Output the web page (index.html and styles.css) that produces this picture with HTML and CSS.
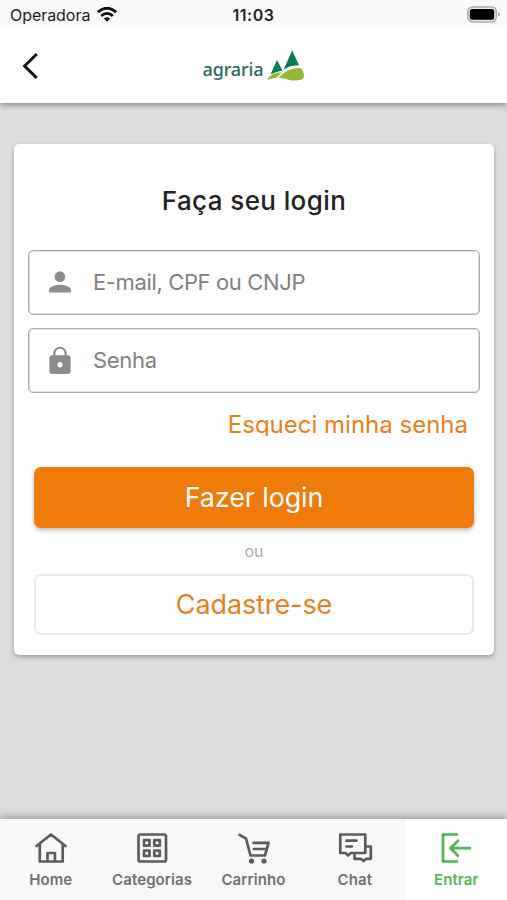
FILE: index.html
```html
<!DOCTYPE html>
<html lang="pt-BR">
<head>
<meta charset="utf-8">
<meta name="viewport" content="width=device-width">
<title>Agraria - Login</title>
<link rel="stylesheet" href="styles.css">
</head>
<body>
<div class="status">
  <div class="carrier"><span>Operadora</span>
    <svg width="20" height="15" viewBox="0 0 20 15"><g fill="none" stroke="#111" stroke-width="2.800"><path d="M.9 5.200C6-.1 14-.1 19.100 5.200"/><path d="M4.200 8.900C7.600 5.600 12.400 5.600 15.800 8.900"/></g><path fill="#111" d="M6.800 11.500C8.600 9.800 11.400 9.800 13.200 11.500L10 14.700z"/></svg>
  </div>
  <time class="clock">11:03</time>
  <svg class="battery" width="33" height="17" viewBox="0 0 33 17"><rect x=".9" y=".9" width="28.400" height="15" rx="4.800" fill="#eee" stroke="#aaa" stroke-width="1.500"/><rect x="2.800" y="3" width="24.400" height="10.800" rx="2.500"/><path fill="#aaa" d="M31 6.200q2 .7 2 2.200t-2 2.200z"/></svg>
</div>
<header class="header">
  <svg class="back" width="18" height="28" viewBox="0 0 18 28"><path d="M15.800 2 3.600 14l12.200 12" fill="none" stroke="#111" stroke-width="3"/></svg>
  <div class="brand"><span>agraria</span>
    <svg width="38" height="32" viewBox="0 0 38 32"><path fill="#087b5c" d="M10 10 15.500 20.500Q9.500 21.500 3.500 24.500zM25.200 .500 32 15.200Q23 15.200 16.600 19.500z"/><path fill="#96b535" d="M0 30Q4 22.500 15 22.200L9.500 27.700Q5 28 0 30zM11.500 28Q19 18.500 32.500 18C35 18 37 23 37 26C37 31 27 31 23.500 30.200Q17 28 11.500 28z"/></svg>
  </div>
</header>
<main class="content">
  <form class="card">
    <h1>Faça seu login</h1>
    <label class="field"><svg width="32" height="32" viewBox="0 0 24 24"><circle cx="12" cy="8" r="4"/><path d="M12 14c-2.700 0-8.200 1.300-8.200 4v1.900h16.400V18c0-2.700-5.500-4-8.200-4z"/></svg><input type="text" placeholder="E-mail, CPF ou CNJP"></label>
    <label class="field"><svg width="32" height="32" viewBox="0 0 24 24"><path d="M18 8.500h-1V7c0-2.760-2.240-5-5-5S7 4.240 7 7v1.500H6c-1.100 0-2 .9-2 2V20.500c0 1.100.9 2 2 2h12c1.100 0 2-.9 2-2V10.500c0-1.100-.9-2-2-2zm-6 9c-1.100 0-2-.9-2-2s.9-2 2-2 2 .9 2 2-.9 2-2 2zm3.400-9H8.600V7c0-1.870 1.530-3.400 3.400-3.400s3.400 1.530 3.400 3.400v1.500z"/></svg><input class="secret" type="password" placeholder="Senha"></label>
    <a class="forgot">Esqueci minha senha</a>
    <button class="btn primary" type="button"><span>Fazer login</span></button>
    <p class="or">ou</p>
    <button class="btn outline" type="button"><span>Cadastre-se</span></button>
  </form>
</main>
<nav class="tabs">
  <a class="tab"><svg width="36" height="34" viewBox="0 0 36 34"><path d="M3.500 15 18 3.500 32.500 15M6.800 13V30.500h22.900V13M14.500 30.500V22h7.400v8.500"/></svg><span>Home</span></a>
  <a class="tab"><svg width="36" height="34" viewBox="0 0 36 34"><rect x="4.500" y="3.500" width="27.500" height="27" rx="2"/><path d="M10 9.200h5.500v5.500H10zM20.300 9.200h5.500v5.500h-5.500zM10 19.500h5.500V25H10zM20.300 19.500h5.500V25h-5.500z"/></svg><span>Categorias</span></a>
  <a class="tab"><svg width="36" height="34" viewBox="0 0 36 34"><path d="M4.500 3.800 11 7.500l4.500 17H30L33.500 11.800H18.500M18.800 18H31"/><g class="dot"><circle cx="16.500" cy="30" r="2.600"/><circle cx="29" cy="30" r="2.600"/></g></svg><span>Carrinho</span></a>
  <a class="tab"><svg width="36" height="34" viewBox="0 0 36 34"><path d="M3.300 3.500h25V22H14L11 24.500 8.500 22H3.300zM9.500 9.700h10M9.500 15.500h5.500M28.300 15.500h5.500v12.300h-4.500l-2.800 2.200-2.800-2.200H17.500V22"/></svg><span>Chat</span></a>
  <a class="tab active"><svg width="36" height="34" viewBox="0 0 36 34"><path d="M19 3.500H5V30.500h14M32 17.200H13M20 9.700l-7.500 7.500 7.500 7.500"/></svg><span>Entrar</span></a>
</nav>
</body>
</html>
```
FILE: styles.css
```css
* { box-sizing: border-box; }
body {
  margin: 0;
  height: 900px;
  display: flex;
  flex-direction: column;
  overflow: hidden;
  background: #dcdcdc;
  font-family: Inter, sans-serif;
  color: #222;
}
svg { display: block; flex: none; }
.status {
  height: 28px;
  flex: none;
  display: grid;
  grid-template-columns: 1fr auto 1fr;
  align-items: center;
  padding: 1px 7px 0 10px;
  background: #f9f9f9;
  z-index: 2;
}
.carrier { display: flex; align-items: center; gap: 7px; font-size: 16px; letter-spacing: -.05px; }
.clock { font-size: 16px; font-weight: 600; letter-spacing: .5px; margin-right: 3px; }
.battery { justify-self: end; }
.header {
  height: 75px;
  flex: none;
  display: grid;
  grid-template-columns: 1fr auto 1fr;
  align-items: center;
  padding: 0 21px;
  background: #fff;
  box-shadow: 0 2px 6px rgba(0, 0, 0, .4);
  z-index: 1;
}
.brand { display: flex; align-items: center; gap: 3px; color: #2b6a5b; font: 500 18px/24px "Noto Sans", sans-serif; letter-spacing: -.1px; }
.brand span { padding-top: 7px; }
.content { flex: 1; padding: 41px 13px 0 14px; }
.card {
  height: 511px;
  display: flex;
  flex-direction: column;
  padding: 38px 14px 20px;
  background: #fff;
  border-radius: 5px;
  box-shadow: 0 2px 4px rgba(0, 0, 0, .3);
}
h1 { margin: 0 0 30px; font-size: 26px; line-height: 38px; font-weight: 500; letter-spacing: .4px; text-align: center; }
.field {
  height: 65px;
  flex: none;
  margin-bottom: 13px;
  display: flex;
  align-items: center;
  gap: 17px;
  padding: 0 15px 2px;
  border: 1px solid #aaa;
  border-radius: 5px;
  box-shadow: inset 0 0 0 1px #dedede;
}
.field svg { fill: #8b8b8b; }
.field input { flex: 1; min-width: 0; padding: 0; border: 0; outline: 0; background: none; font: 22px Inter, sans-serif; letter-spacing: -.37px; }
.field .secret { letter-spacing: -.3px; }
.field input::placeholder { color: #808080; opacity: 1; }
.forgot { align-self: flex-end; height: 32px; margin: -1px 12px 31px 0; overflow: hidden; font-size: 24px; line-height: 40px; color: #e97e20; }
.btn { height: 61px; flex: none; margin: 0 6px; padding: 0; border-radius: 7px; font: 27px Inter, sans-serif; }
.primary { border: 0; background: #ef7b0b; color: #fff; letter-spacing: -.15px; box-shadow: 0 2px 4px rgba(0, 0, 0, .3); }
.outline { border: 2px solid #e9e9e9; background: #fff; color: #e97e20; letter-spacing: -.1px; }
.or { margin: 0; height: 46px; font-size: 16px; line-height: 46px; text-align: center; color: #aaa; }
.tabs { height: 81px; flex: none; display: grid; grid-template-columns: repeat(5, 1fr); background: #f8f8f8; box-shadow: 0 -2px 8px rgba(0, 0, 0, .32); }
.tab { display: flex; flex-direction: column; align-items: center; padding-top: 12px; gap: 5px; color: #707070; font-size: 15px; line-height: 20px; font-weight: 600; letter-spacing: .1px; }
.tab svg { fill: none; stroke: #5b5b5b; stroke-width: 2.700; stroke-linecap: round; stroke-linejoin: round; }
.tab .dot { fill: #5b5b5b; stroke: none; }
.active { background: #fff; color: #58b65a; }
.active svg { stroke: #50b450; }
```
